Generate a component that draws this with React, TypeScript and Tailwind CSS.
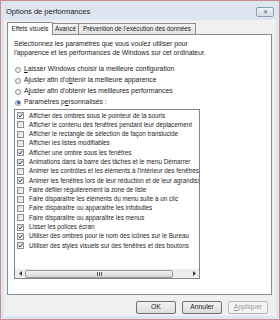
const items: [string, boolean][] = [
  ['Afficher des ombres sous le pointeur de la souris', true],
  ['Afficher le contenu des fenêtres pendant leur déplacement', false],
  ['Afficher le rectangle de sélection de façon translucide', false],
  ['Afficher les listes modifiables', false],
  ['Afficher une ombre sous les fenêtres', true],
  ['Animations dans la barre des tâches et le menu Démarrer', true],
  ["Animer les contrôles et les éléments à l'intérieur des fenêtres", false],
  ['Animer les fenêtres lors de leur réduction et de leur agrandissement', true],
  ['Faire défiler régulièrement la zone de liste', false],
  ['Faire disparaître les éléments du menu suite à un clic', false],
  ['Faire disparaître ou apparaître les infobulles', false],
  ['Faire disparaître ou apparaître les menus', false],
  ['Lisser les polices écran', true],
  ['Utiliser des ombres pour le nom des icônes sur le Bureau', true],
  ['Utiliser des styles visuels sur des fenêtres et des boutons', true],
];

function Radio({ checked, children }: { checked?: boolean; children: React.ReactNode }) {
  return (
    <div className="flex h-[11px] items-center gap-[3px] pl-[1px]">
      <span className="flex h-[6px] w-[6px] items-center justify-center rounded-full border border-[#8e8f8f] bg-gradient-to-br from-[#e3e3e3] to-white">
        {checked && <span className="h-[3px] w-[3px] rounded-full bg-[#2a5aa8]" />}
      </span>
      <span>{children}</span>
    </div>
  );
}

function Check({ checked }: { checked: boolean }) {
  return (
    <span className="flex h-[7px] w-[7px] shrink-0 items-center justify-center border border-[#8e8f8f] bg-gradient-to-br from-[#dcdcdc] to-[#f8f8f8]">
      {checked && (
        <svg width="5" height="5" viewBox="0 0 5 5">
          <path d="M0.6 2.6 L2 4 L4.5 0.8" stroke="#2b3f63" strokeWidth="1" fill="none" />
        </svg>
      )}
    </span>
  );
}

function Button({ children, disabled }: { children: React.ReactNode; disabled?: boolean }) {
  return (
    <div
      className={
        disabled
          ? 'flex h-[13px] w-[40px] items-center justify-center rounded-[2px] border border-[#b5b8bb] bg-[#f4f4f4] text-[#9a9a9a]'
          : 'flex h-[13px] w-[40px] items-center justify-center rounded-[2px] border border-[#707070] bg-gradient-to-b from-[#f3f3f3] to-[#dcdcdc]'
      }
    >
      {children}
    </div>
  );
}

export default function App() {
  return (
    <div className="flex h-[320px] w-[280px] flex-col overflow-hidden border border-[#c98d92] bg-[#dde5ee] font-['Liberation_Sans',Arial,sans-serif] text-[6.8px] leading-none text-[#1c1c1c]">
      {/* title bar */}
      <div className="flex h-[19px] shrink-0 items-center justify-between pl-[5px] pr-[5px] pt-[2px]">
        <span className="text-[7.5px]">Options de performances</span>
        <span className="flex h-[10px] w-[18px] items-center justify-center rounded-[2px] border border-[#8d9db2] bg-gradient-to-b from-[#eef2f7] to-[#d5dde8] text-[6px] text-[#505a66]">
          ✕
        </span>
      </div>

      {/* client area */}
      <div className="mx-[3px] mb-[3px] flex flex-1 flex-col bg-[#f0f0f0] pl-[3px] pr-[4px] pt-[1px]">
        {/* tabs */}
        <div className="flex h-[13px] shrink-0 items-end text-[6.3px]">
          <div className="relative z-10 -mb-px flex h-[13px] w-[46px] items-center justify-center border border-b-0 border-[#898c95] bg-white">
            Effets visuels
          </div>
          <div className="flex h-[11px] w-[26px] items-center justify-center border border-b-0 border-l-0 border-[#898c95] bg-gradient-to-b from-[#f2f2f2] to-[#e3e3e3]">
            Avancé
          </div>
          <div className="flex h-[11px] w-[117px] items-center justify-center whitespace-nowrap border border-b-0 border-l-0 border-[#898c95] bg-gradient-to-b from-[#f2f2f2] to-[#e3e3e3]">
            Prévention de l'exécution des données
          </div>
        </div>

        {/* panel */}
        <div className="flex h-[261px] shrink-0 flex-col border border-[#898c95] bg-white pl-[6px] pt-[5px]">
          <p className="leading-[8.5px]">
            Sélectionnez les paramètres que vous voulez utiliser pour
            <br />
            l'apparence et les performances de Windows sur cet ordinateur.
          </p>

          <div className="mt-[7px] flex flex-col">
            <Radio>
              <span className="underline">L</span>aisser Windows choisir la meilleure configuration
            </Radio>
            <Radio>
              Ajuster afin d'o<span className="underline">b</span>tenir la meilleure apparence
            </Radio>
            <Radio>
              A<span className="underline">j</span>uster afin d'obtenir les meilleures performances
            </Radio>
            <Radio checked>
              Paramètres p<span className="underline">e</span>rsonnalisés :
            </Radio>
          </div>

          {/* list box */}
          <div className="mt-[1px] flex h-[170px] w-[186px] flex-col justify-between border border-[#828790] bg-white text-[6.3px]">
            <div className="flex flex-col pt-[1px]">
              {items.map(([label, checked], i) => (
                <div key={i} className="flex h-[9.3px] items-center gap-[5px] overflow-hidden whitespace-nowrap pl-[2px]">
                  <Check checked={checked} />
                  <span>{label}</span>
                </div>
              ))}
            </div>

            {/* horizontal scrollbar */}
            <div className="flex h-[9px] items-center bg-[#ececec]">
              <div className="flex h-full w-[10px] items-center justify-center">
                <svg width="3" height="5" viewBox="0 0 3 5">
                  <path d="M3 0 L0 2.5 L3 5 Z" fill="#3a3a3a" />
                </svg>
              </div>
              <div className="flex h-[8px] w-[148px] items-center justify-center rounded-[2px] border border-[#9a9a9a] bg-gradient-to-b from-[#f3f3f3] to-[#d6d6d6]">
                <svg width="5" height="4" viewBox="0 0 5 4">
                  <path d="M0.5 0 V4 M2.5 0 V4 M4.5 0 V4" stroke="#555" strokeWidth="1" />
                </svg>
              </div>
              <div className="flex-1" />
              <div className="flex h-full w-[10px] items-center justify-center">
                <svg width="3" height="5" viewBox="0 0 3 5">
                  <path d="M0 0 L3 2.5 L0 5 Z" fill="#3a3a3a" />
                </svg>
              </div>
            </div>
          </div>
        </div>

        {/* buttons */}
        <div className="mt-[6px] flex justify-end gap-[6px] pr-[4px]">
          <Button>OK</Button>
          <Button>Annuler</Button>
          <Button disabled>
            <span className="underline">A</span>ppliquer
          </Button>
        </div>
      </div>
    </div>
  );
}
